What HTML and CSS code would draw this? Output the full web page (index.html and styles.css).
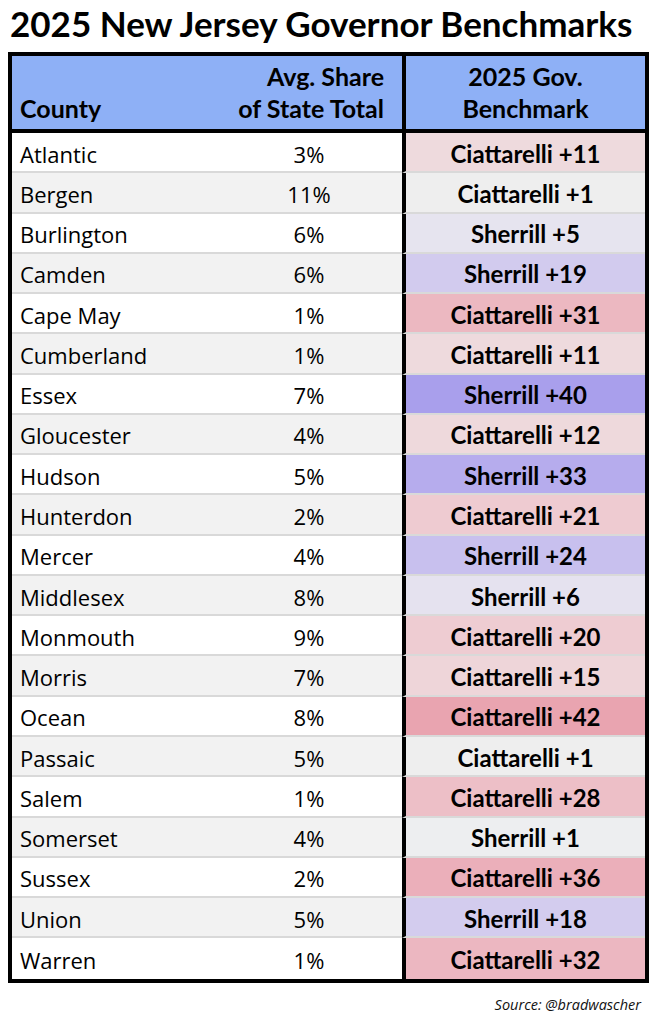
FILE: index.html
```html
<!DOCTYPE html>
<html>
<head>
<meta charset="utf-8">
<link rel="stylesheet" href="styles.css">
</head>
<body>
<h1 class="title">2025 New Jersey Governor Benchmarks</h1>
<div class="table">
  <div class="hcell hcounty">County</div>
  <div class="hcell hshare">Avg. Share<br>of State Total</div>
  <div class="hcell hbench">2025 Gov.<br>Benchmark</div>

  <div class="cell county">Atlantic</div><div class="cell share">3%</div><div class="cell bench" style="background:#eedadd">Ciattarelli +11</div>
  <div class="cell county alt">Bergen</div><div class="cell share alt">11%</div><div class="cell bench" style="background:#eeeeee">Ciattarelli +1</div>
  <div class="cell county">Burlington</div><div class="cell share">6%</div><div class="cell bench" style="background:#e6e4ef">Sherrill +5</div>
  <div class="cell county alt">Camden</div><div class="cell share alt">6%</div><div class="cell bench" style="background:#d2cbee">Sherrill +19</div>
  <div class="cell county">Cape May</div><div class="cell share">1%</div><div class="cell bench" style="background:#ecb8c1">Ciattarelli +31</div>
  <div class="cell county alt">Cumberland</div><div class="cell share alt">1%</div><div class="cell bench" style="background:#eedadd">Ciattarelli +11</div>
  <div class="cell county">Essex</div><div class="cell share">7%</div><div class="cell bench" style="background:#a99fec">Sherrill +40</div>
  <div class="cell county alt">Gloucester</div><div class="cell share alt">4%</div><div class="cell bench" style="background:#eed9dc">Ciattarelli +12</div>
  <div class="cell county">Hudson</div><div class="cell share">5%</div><div class="cell bench" style="background:#b6aced">Sherrill +33</div>
  <div class="cell county alt">Hunterdon</div><div class="cell share alt">2%</div><div class="cell bench" style="background:#eecbd1">Ciattarelli +21</div>
  <div class="cell county">Mercer</div><div class="cell share">4%</div><div class="cell bench" style="background:#c8c0ee">Sherrill +24</div>
  <div class="cell county alt">Middlesex</div><div class="cell share alt">8%</div><div class="cell bench" style="background:#e5e2ef">Sherrill +6</div>
  <div class="cell county">Monmouth</div><div class="cell share">9%</div><div class="cell bench" style="background:#eeccd2">Ciattarelli +20</div>
  <div class="cell county alt">Morris</div><div class="cell share alt">7%</div><div class="cell bench" style="background:#eed5d9">Ciattarelli +15</div>
  <div class="cell county">Ocean</div><div class="cell share">8%</div><div class="cell bench" style="background:#e9a4b0">Ciattarelli +42</div>
  <div class="cell county alt">Passaic</div><div class="cell share alt">5%</div><div class="cell bench" style="background:#eeeeee">Ciattarelli +1</div>
  <div class="cell county">Salem</div><div class="cell share">1%</div><div class="cell bench" style="background:#edbfc7">Ciattarelli +28</div>
  <div class="cell county alt">Somerset</div><div class="cell share alt">4%</div><div class="cell bench" style="background:#edeef0">Sherrill +1</div>
  <div class="cell county">Sussex</div><div class="cell share">2%</div><div class="cell bench" style="background:#ebafba">Ciattarelli +36</div>
  <div class="cell county alt">Union</div><div class="cell share alt">5%</div><div class="cell bench" style="background:#d3ccee">Sherrill +18</div>
  <div class="cell county last">Warren</div><div class="cell share last">1%</div><div class="cell bench last" style="background:#ecb7c1">Ciattarelli +32</div>
</div>
<div class="source">Source: @bradwascher</div>
</body>
</html>
```
FILE: styles.css
```css
html, body {
  margin: 0;
  padding: 0;
  background: #ffffff;
}
body {
  width: 658px;
  height: 1024px;
  font-family: "Lato", "Open Sans", sans-serif;
  color: #000;
}
.title {
  margin: 0;
  height: 52px;
  padding-left: 10px;
  font-family: "Lato", sans-serif;
  font-weight: 700;
  font-size: 35px;
  line-height: 46px;
  white-space: nowrap;
}
.table {
  margin-left: 8px;
  width: 641px;
  box-sizing: border-box;
  border: 4px solid #000;
  display: grid;
  grid-template-columns: 204px 186px 243px;
  grid-template-rows: 77px;
  grid-auto-rows: 40.28px;
}
.hcell {
  background: #8eb0f6;
  border-bottom: 4px solid #000;
  font-weight: 700;
  font-size: 25px;
  line-height: 32px;
  display: flex;
  align-items: flex-end;
  padding-bottom: 5px;
  box-sizing: border-box;
}
.hcounty {
  padding-left: 8px;
}
.hshare {
  justify-content: flex-end;
  text-align: right;
  padding-right: 18px;
}
.hbench {
  justify-content: center;
  text-align: center;
  border-left: 4px solid #000;
}
.cell {
  box-sizing: border-box;
  border-bottom: 2px solid #d9d9d9;
  display: flex;
  align-items: center;
  background: #ffffff;
  padding-top: 3px;
}
.cell.alt {
  background: #f2f2f2;
}
.cell.last {
  border-bottom: none;
}
.county {
  padding-left: 8px;
  font-family: "Open Sans", sans-serif;
  font-size: 22px;
}
.share {
  justify-content: center;
  font-family: "Open Sans", sans-serif;
  font-size: 22px;
}
.bench {
  justify-content: center;
  border-left: 4px solid #000;
  font-weight: 700;
  font-size: 24px;
  padding-top: 2px;
}
.source {
  text-align: right;
  padding-right: 17px;
  margin-top: 12px;
  font-family: "Open Sans", sans-serif;
  font-style: italic;
  font-size: 14.5px;
  color: #111;
}
```
